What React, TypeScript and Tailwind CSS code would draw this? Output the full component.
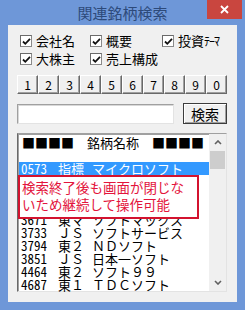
import React from 'react';

const jp = "font-['Noto_Sans_CJK_JP',sans-serif]";
const mono = "font-['Noto_Sans_Mono_CJK_JP','Noto_Sans_CJK_JP',monospace]";

type Row = { code: string; mkt: string; name: string; sel?: boolean };

// rows 4 and 5 sit fully under the callout box
const rows: Row[] = [
  { code: '', mkt: '', name: '' },
  { code: '0573', mkt: '指標', name: 'マイクロソフト', sel: true },
  { code: '3667', mkt: '東マ', name: 'ソフト東京商店' },
  { code: '', mkt: '', name: '' },
  { code: '', mkt: '', name: '' },
  { code: '3671', mkt: '東マ', name: 'ソフトマックス' },
  { code: '3733', mkt: 'ＪＳ', name: 'ソフトサービス' },
  { code: '3794', mkt: '東２', name: 'ＮＤソフト' },
  { code: '3851', mkt: 'ＪＳ', name: '日本一ソフト' },
  { code: '4464', mkt: '東２', name: 'ソフト９９' },
  { code: '4687', mkt: '東１', name: 'ＴＤＣソフト' },
];

function Box() {
  return (
    <div className="flex h-[12px] w-[12px] items-center justify-center border border-[#8a8a8a] border-t-[#6a6a6a] border-l-[#6a6a6a] bg-white">
      <svg width="9" height="9" viewBox="0 0 9 9">
        <path d="M1 4.5 L3.3 6.8 L8 1.8" fill="none" stroke="#111" strokeWidth="1.8" />
      </svg>
    </div>
  );
}

function Check({ label, w }: { label: React.ReactNode; w: string }) {
  return (
    <div className={`flex items-center gap-[4px] ${w}`}>
      <Box />
      <span className="text-[13px] leading-[14px] text-black">{label}</span>
    </div>
  );
}

export default function App() {
  return (
    <div className={`flex h-[310px] w-[245px] flex-col bg-[#6e97d8] ${jp}`}>
      <div className="relative flex h-[25px] items-center justify-center">
        <span className="text-[15px] leading-none text-[#2d4a7a]">関連銘柄検索</span>
        <div className="absolute right-[3px] top-0 flex h-[19px] w-[35px] items-center justify-center bg-[#c9463f]">
          <svg width="9" height="9" viewBox="0 0 9 9">
            <path d="M1 1 L8 8 M8 1 L1 8" stroke="#fff" strokeWidth="1.8" />
          </svg>
        </div>
      </div>

      <div className="mx-[8px] mb-[8px] flex flex-1 flex-col bg-[#f0f0f0] pl-[9px] pr-[10px] pt-[9px]">
        <div className="flex pl-[3px]">
          <Check label="会社名" w="w-[70px]" />
          <Check label="概要" w="w-[72px]" />
          <Check
            label={
              <>
                投資<span className="text-[12px] tracking-[-1px]">ﾃｰﾏ</span>
              </>
            }
            w=""
          />
        </div>
        <div className="mt-[4px] flex pl-[3px]">
          <Check label="大株主" w="w-[70px]" />
          <Check label="売上構成" w="w-[72px]" />
        </div>

        <div className="mt-[9px] grid h-[19px] grid-cols-10">
          {['1', '2', '3', '4', '5', '6', '7', '8', '9', '0'].map((n) => (
            <div
              key={n}
              className="flex items-center justify-center border border-t-white border-l-white border-r-[#696969] border-b-[#696969] bg-[#f0f0f0] text-[12px] leading-none text-black shadow-[inset_-1px_-1px_0_#a0a0a0]"
            >
              {n}
            </div>
          ))}
        </div>

        <div className="mt-[9px] flex items-center">
          <div className="h-[20px] w-[157px] border border-t-[#a0a0a0] border-l-[#a0a0a0] border-r-[#e3e3e3] border-b-[#e3e3e3] bg-white shadow-[inset_1px_1px_0_#d8d8d8]" />
          <div className="ml-auto flex h-[21px] w-[44px] items-center justify-center border border-[#3c3c3c] bg-[#f0f0f0] text-[14px] leading-none text-black shadow-[inset_1px_1px_0_#fff,inset_-1px_-1px_0_#a0a0a0]">
            検索
          </div>
        </div>

        <div className="relative mt-[9px] flex h-[159px] border border-t-[#a0a0a0] border-l-[#696969] border-r-[#e3e3e3] border-b-[#e3e3e3] bg-white shadow-[inset_1px_1px_0_#a0a0a0]">
          <div className={`flex flex-1 flex-col pl-[1px] pt-[2px] text-[13px] leading-[13px] text-black ${mono}`}>
            <div className="h-[13px] whitespace-pre pl-[3px]">■■■■　銘柄名称　■■■■</div>
            {rows.map((r, i) => (
              <div
                key={i}
                className={`flex h-[13px] whitespace-pre pl-[2px] ${r.sel ? 'bg-[#3399ff] text-white' : ''}`}
              >
                <span className="w-[37px]">{r.code}</span>
                <span className="w-[34px]">{r.mkt}</span>
                <span>{r.name}</span>
              </div>
            ))}
          </div>
          <div className="flex w-[17px] flex-col bg-[#f0f0f0]">
            <div className="flex h-[17px] items-center justify-center">
              <svg width="8" height="5" viewBox="0 0 8 5">
                <path d="M1 4 L4 1 L7 4" fill="none" stroke="#606060" strokeWidth="1.6" />
              </svg>
            </div>
            <div className="mx-[1px] h-[18px] bg-[#cdcdcd]" />
            <div className="flex-1" />
            <div className="flex h-[17px] items-center justify-center">
              <svg width="8" height="5" viewBox="0 0 8 5">
                <path d="M1 1 L4 4 L7 1" fill="none" stroke="#606060" strokeWidth="1.6" />
              </svg>
            </div>
          </div>

          <div className={`absolute left-[0px] top-[41px] h-[44px] w-[181px] border-2 border-[#d3132f] bg-white px-[2px] pt-[2px] text-[13.5px] leading-[17px] text-[#e3143c] ${jp}`}>
            検索終了後も画面が閉じな
            <br />
            いため継続して操作可能
          </div>
        </div>
      </div>
    </div>
  );
}
